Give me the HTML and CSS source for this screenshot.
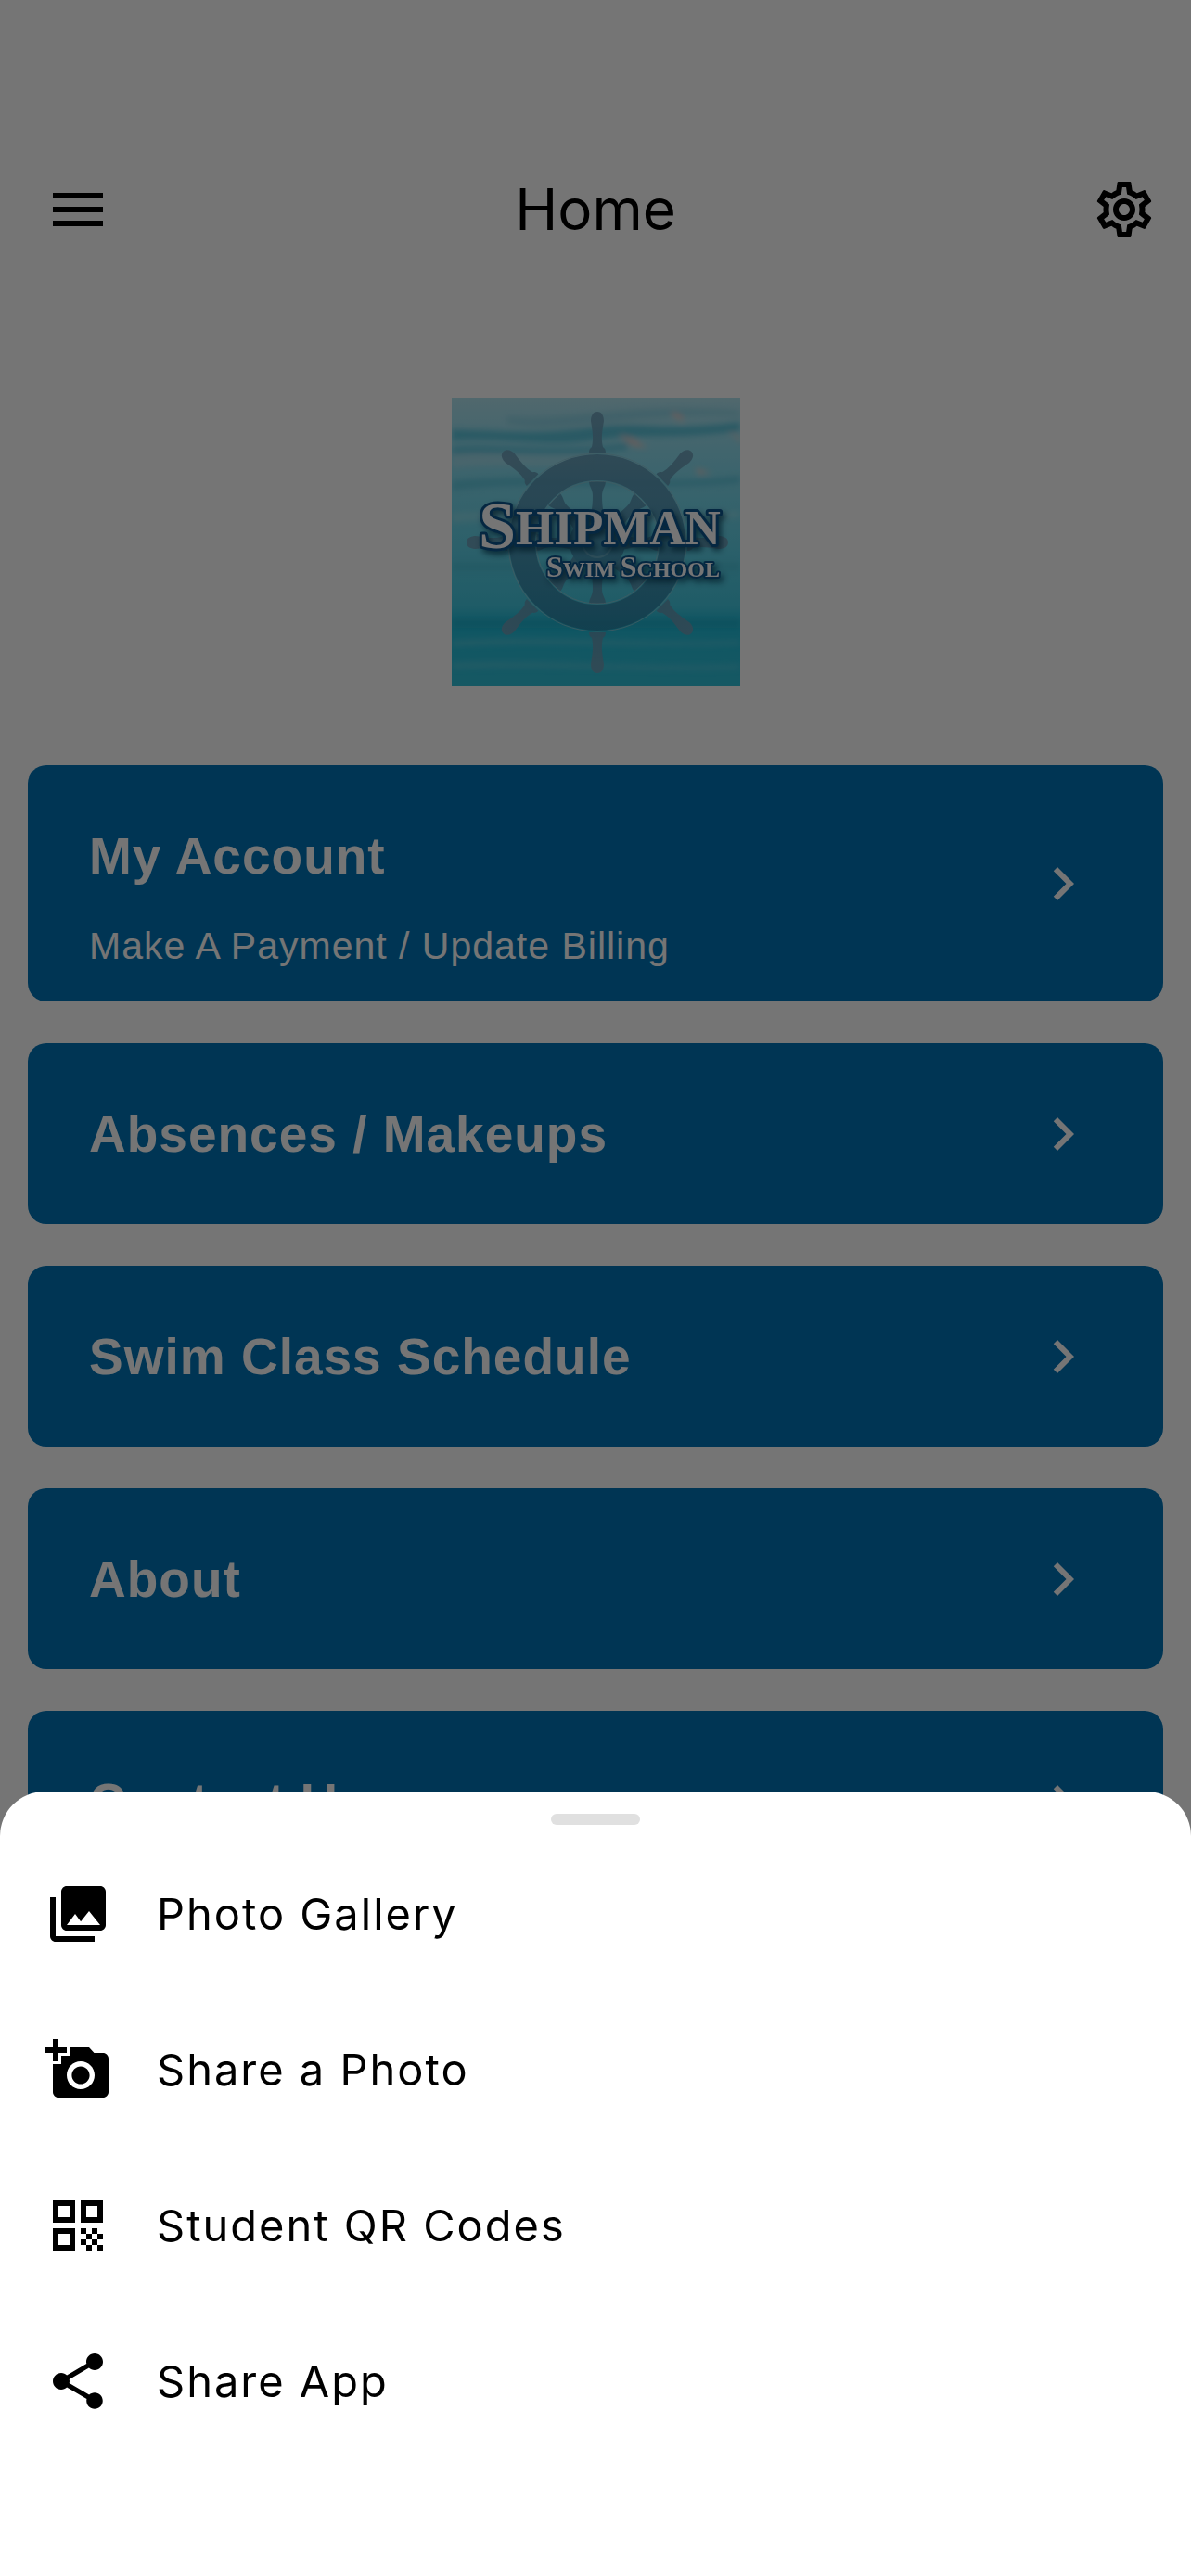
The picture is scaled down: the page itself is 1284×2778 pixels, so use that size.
FILE: index.html
```html
<!DOCTYPE html>
<html lang="en">
<head>
<meta charset="utf-8">
<meta name="viewport" content="width=device-width, initial-scale=1">
<title>Home</title>
<link rel="stylesheet" href="styles.css">
</head>
<body>
<svg class="defs" aria-hidden="true">
  <symbol id="chevron" viewBox="0 0 24 24"><path d="M10 6 8.59 7.41 13.17 12l-4.58 4.59L10 18l6-6z"/></symbol>
</svg>

<div class="page">
  <header class="topbar">
    <button class="icon-button" type="button" aria-label="Menu">
      <svg class="icon" viewBox="0 0 24 24"><path d="M3 18h18v-2H3v2zm0-5h18v-2H3v2zm0-7v2h18V6H3z"/></svg>
    </button>
    <h1 class="topbar-title">Home</h1>
    <button class="icon-button icon-button-end" type="button" aria-label="Settings">
      <svg class="icon" viewBox="0 0 24 24"><path d="M19.43 12.98c.04-.32.07-.64.07-.98 0-.34-.03-.66-.07-.98l2.11-1.65c.19-.15.24-.42.12-.64l-2-3.46c-.09-.16-.26-.25-.44-.25-.06 0-.12.01-.17.03l-2.49 1c-.52-.4-1.08-.73-1.69-.98l-.38-2.65C14.46 2.18 14.25 2 14 2h-4c-.25 0-.46.18-.49.42l-.38 2.65c-.61.25-1.17.59-1.69.98l-2.49-1c-.06-.02-.12-.03-.18-.03-.17 0-.34.09-.43.25l-2 3.46c-.13.22-.07.49.12.64l2.11 1.65c-.04.32-.07.65-.07.98 0 .33.03.66.07.98l-2.11 1.65c-.19.15-.24.42-.12.64l2 3.46c.09.16.26.25.44.25.06 0 .12-.01.17-.03l2.49-1c.52.4 1.08.73 1.69.98l.38 2.65c.03.24.24.42.49.42h4c.25 0 .46-.18.49-.42l.38-2.65c.61-.25 1.17-.59 1.69-.98l2.49 1c.06.02.12.03.18.03.17 0 .34-.09.43-.25l2-3.46c.12-.22.07-.49-.12-.64l-2.11-1.65zm-1.98-1.71c.04.31.05.52.05.73 0 .21-.02.43-.05.73l-.14 1.13.89.7 1.08.84-.7 1.21-1.27-.51-1.04-.42-.9.68c-.43.32-.84.56-1.25.73l-1.06.43-.16 1.13-.2 1.35h-1.4l-.19-1.35-.16-1.13-1.06-.43c-.43-.18-.83-.41-1.23-.71l-.91-.7-1.06.43-1.27.51-.7-1.21 1.08-.84.89-.7-.14-1.13c-.03-.31-.05-.54-.05-.74s.02-.43.05-.73l.14-1.13-.89-.7-1.08-.84.7-1.21 1.27.51 1.04.42.9-.68c.43-.32.84-.56 1.25-.73l1.06-.43.16-1.13.2-1.35h1.39l.19 1.35.16 1.13 1.06.43c.43.18.83.41 1.23.71l.91.7 1.06-.43 1.27-.51.7 1.21-1.07.85-.89.7.14 1.13zM12 8c-2.21 0-4 1.79-4 4s1.79 4 4 4 4-1.79 4-4-1.79-4-4-4zm0 6c-1.1 0-2-.9-2-2s.9-2 2-2 2 .9 2 2-.9 2-2 2z"/></svg>
    </button>
  </header>

  <main class="content">
    <svg class="logo" viewBox="0 0 311 311" role="img" aria-label="Shipman Swim School">
      <defs>
        <linearGradient id="water" x1="0" y1="0" x2="0" y2="1">
          <stop offset="0" stop-color="#b0e2ee"/>
          <stop offset=".2" stop-color="#8cdcee"/>
          <stop offset=".5" stop-color="#62d2e8"/>
          <stop offset=".72" stop-color="#44c8e0"/>
          <stop offset=".78" stop-color="#22bcd8"/>
          <stop offset="1" stop-color="#30c0d8"/>
        </linearGradient>
        <linearGradient id="wood" gradientUnits="userSpaceOnUse" x1="0" y1="-141" x2="0" y2="141">
          <stop offset="0" stop-color="#6f9fb8"/>
          <stop offset=".4" stop-color="#5093b2"/>
          <stop offset="1" stop-color="#1c84a6"/>
        </linearGradient>
        <filter id="soft" x="-20%" y="-100%" width="140%" height="300%"><feGaussianBlur stdDeviation="3"/></filter>
        <filter id="drop" x="-10%" y="-30%" width="130%" height="180%"><feDropShadow dx="3" dy="4" stdDeviation="3" flood-color="#003050" flood-opacity=".7"/></filter>
        <g id="spoke">
          <path d="M-9-97h18c0-4-2-5-3-6-2-8-1-16 1-28 0-5-2-10-7-10s-7 5-7 10c2 12 3 20 1 28-1 1-3 2-3 6z"/>
        </g>
        <g id="inner-spoke">
          <path d="M-9-66H9c0 6-4 8-4 16 0 12 2 22 6 30h-22c4-8 6-18 6-30 0-8-4-10-4-16z"/>
        </g>
      </defs>
      <rect width="311" height="311" fill="url(#water)"/>
      <g filter="url(#soft)">
        <path d="M0 34c60 2 90 6 150-2s70 6 161-6v10c-80 10-110 2-160 10S60 42 0 46z" fill="#3cb4d0" opacity=".65"/>
        <path d="M0 52c50-4 120 8 190-4v8c-70 10-130 2-190 6z" fill="#3cb4d0" opacity=".5"/>
        <path d="M60 20c60 8 120-16 250-6v6c-100-6-190 20-250 8z" fill="#8ad0e2" opacity=".8"/>
        <path d="M0 62c60-4 90 6 150 0v10c-60 4-100-2-150 4z" fill="#c8e0e8" opacity=".35"/>
        <path d="M0 90c80-10 220 6 311-6v8c-100 10-220-4-311 8z" fill="#4fbcd4" opacity=".6"/>
        <path d="M0 124c90-6 200 6 311-2v7c-110 8-220-4-311 6z" fill="#9fe0ec" opacity=".5"/>
        <path d="M0 178h311v8H0z" fill="#45b9d0" opacity=".5"/>
        <path d="M0 238h311v10H0z" fill="#1aa5c0" opacity=".4"/>
        <path d="M0 262c100-6 200 4 311 0v4c-100 4-200-4-311 2z" fill="#66cee0" opacity=".6"/>
        <path d="M0 286c100-4 200 6 311 2v4c-100 4-200-4-311 0z" fill="#66cee0" opacity=".6"/>
        <path d="M236 16q12 0 15 9-10-1-15-9zM262 76l18 5-14 1zM298 36l14 8v4zM180 40l14 4 18 10-16-2z" fill="#e6c9c4"/>
      </g>
      <g transform="translate(157 156)" fill="url(#wood)">
        <g opacity=".9">
          <use href="#spoke"/>
          <use href="#spoke" transform="rotate(46)"/>
          <use href="#spoke" transform="rotate(90)"/>
          <use href="#spoke" transform="rotate(134)"/>
          <use href="#spoke" transform="rotate(180)"/>
          <use href="#spoke" transform="rotate(226)"/>
          <use href="#spoke" transform="rotate(270)"/>
          <use href="#spoke" transform="rotate(314)"/>
          <use href="#inner-spoke"/>
          <use href="#inner-spoke" transform="rotate(45)"/>
          <use href="#inner-spoke" transform="rotate(90)"/>
          <use href="#inner-spoke" transform="rotate(135)"/>
          <use href="#inner-spoke" transform="rotate(180)"/>
          <use href="#inner-spoke" transform="rotate(225)"/>
          <use href="#inner-spoke" transform="rotate(270)"/>
          <use href="#inner-spoke" transform="rotate(315)"/>
          <circle r="30"/>
          <circle r="81" fill="none" stroke="url(#wood)" stroke-width="28"/>
        </g>
        <circle r="96" fill="none" stroke="#8fc6d4" stroke-width="1" opacity=".8"/>
        <circle r="66" fill="none" stroke="#8fc6d4" stroke-width="1" opacity=".8"/>
        <circle r="16" fill="none" stroke="#8fc6d4" stroke-width="2" opacity=".4"/>
      </g>
      <g class="logo-text" filter="url(#drop)">
        <text x="29" y="158"><tspan class="logo-initial" dy="4">S</tspan><tspan class="logo-caps" dy="-4">HIPMAN</tspan></text>
        <text class="logo-small" x="102" y="193"><tspan class="logo-small-initial">S</tspan>WIM <tspan class="logo-small-initial">S</tspan>CHOOL</text>
      </g>
    </svg>

    <nav class="cards" aria-label="Home sections">
      <a class="card card-detailed" href="#account">
        <span class="card-text">
          <span class="card-title">My Account</span>
          <span class="card-subtitle">Make A Payment / Update Billing</span>
        </span>
        <svg class="icon" aria-hidden="true"><use href="#chevron"/></svg>
      </a>
      <a class="card" href="#absences">
        <span class="card-title">Absences / Makeups</span>
        <svg class="icon" aria-hidden="true"><use href="#chevron"/></svg>
      </a>
      <a class="card" href="#schedule">
        <span class="card-title">Swim Class Schedule</span>
        <svg class="icon" aria-hidden="true"><use href="#chevron"/></svg>
      </a>
      <a class="card" href="#about">
        <span class="card-title">About</span>
        <svg class="icon" aria-hidden="true"><use href="#chevron"/></svg>
      </a>
      <a class="card" href="#contact">
        <span class="card-title">Contact Us</span>
        <svg class="icon" aria-hidden="true"><use href="#chevron"/></svg>
      </a>
    </nav>
  </main>
</div>

<div class="scrim"></div>

<section class="sheet" role="dialog" aria-label="More options">
  <div class="sheet-handle"></div>
  <div class="sheet-list">
    <button class="sheet-item" type="button">
      <svg class="icon" viewBox="0 0 24 24"><path d="M22 16V4c0-1.1-.9-2-2-2H8c-1.1 0-2 .9-2 2v12c0 1.1.9 2 2 2h12c1.1 0 2-.9 2-2zm-11-4 2.03 2.71L16 11l4 5H8l3-4zM2 6v14c0 1.1.9 2 2 2h14v-2H4V6H2z"/></svg>
      <span>Photo Gallery</span>
    </button>
    <button class="sheet-item" type="button">
      <svg class="icon" viewBox="0 0 24 24"><path d="M3 4V1h2v3h3v2H5v3H3V6H0V4h3zm3 6V7h3V4h7l1.83 2H21c1.1 0 2 .9 2 2v12c0 1.1-.9 2-2 2H5c-1.1 0-2-.9-2-2V10h3zm7 9c2.76 0 5-2.24 5-5s-2.24-5-5-5-5 2.24-5 5 2.24 5 5 5zm-3.2-5c0 1.77 1.43 3.2 3.2 3.2s3.2-1.43 3.2-3.2-1.43-3.2-3.2-3.2-3.2 1.43-3.2 3.2z"/></svg>
      <span>Share a Photo</span>
    </button>
    <button class="sheet-item" type="button">
      <svg class="icon" viewBox="0 0 24 24" shape-rendering="crispEdges"><path d="M3 11h8V3H3v8zm2-6h4v4H5V5zM3 21h8v-8H3v8zm2-6h4v4H5v-4zM13 3v8h8V3h-8zm6 6h-4V5h4v4zM13 13h2v2h-2zM17 13h2v2h-2zM15 15h2v2h-2zM19 15h2v2h-2zM13 17h2v2h-2zM17 17h2v2h-2zM15 19h2v2h-2zM19 19h2v2h-2z"/></svg>
      <span>Student QR Codes</span>
    </button>
    <button class="sheet-item" type="button">
      <svg class="icon" viewBox="0 0 24 24"><path d="M18 16.08c-.76 0-1.44.3-1.96.77L8.91 12.7c.05-.23.09-.46.09-.7s-.04-.47-.09-.7l7.05-4.11c.54.5 1.25.81 2.04.81 1.66 0 3-1.34 3-3s-1.34-3-3-3-3 1.34-3 3c0 .24.04.47.09.7L8.04 9.81C7.5 9.31 6.79 9 6 9c-1.66 0-3 1.34-3 3s1.34 3 3 3c.79 0 1.5-.31 2.04-.81l7.12 4.16c-.05.21-.08.43-.08.65 0 1.61 1.31 2.92 2.92 2.92s2.92-1.31 2.92-2.92-1.31-2.92-2.92-2.92z"/></svg>
      <span>Share App</span>
    </button>
  </div>
</section>
</body>
</html>
```
FILE: styles.css
```css
* {
  box-sizing: border-box;
}

body {
  margin: 0;
  background: #fff;
  color: #000;
  font-family: Inter, "Liberation Sans", sans-serif;
}

button {
  margin: 0;
  padding: 0;
  border: 0;
  background: none;
  color: inherit;
  font: inherit;
  text-align: left;
}

.defs {
  display: none;
}

.icon {
  display: block;
  flex: none;
  width: 72px;
  height: 72px;
  fill: currentColor;
}

.page {
  min-height: 100vh;
}

.topbar {
  display: grid;
  grid-template-columns: 1fr auto 1fr;
  align-items: center;
  padding: 189px 36px 0 36px;
}

.icon-button {
  justify-self: start;
  padding-left: 12px;
}

.icon-button-end {
  justify-self: end;
  padding-left: 0;
}

.topbar-title {
  margin: 0;
  font-size: 62px;
  font-weight: 400;
  line-height: 74px;
}

.content {
  display: flex;
  flex-direction: column;
  align-items: center;
  gap: 85px;
  padding: 166px 30px 30px;
}

.logo {
  display: block;
  width: 311px;
  height: 311px;
}

.logo-text {
  fill: #fff;
  stroke: #0b568f;
  stroke-width: 6px;
  stroke-linejoin: round;
  paint-order: stroke;
  font-family: "Liberation Serif", serif;
  font-weight: 700;
}

.logo-initial {
  font-size: 72px;
}

.logo-caps {
  font-size: 53px;
}

.logo-small {
  font-size: 24px;
  stroke-width: 4px;
}

.logo-small-initial {
  font-size: 32px;
}

.cards {
  display: flex;
  flex-direction: column;
  align-self: stretch;
  gap: 45px;
}

.card {
  display: flex;
  align-items: center;
  justify-content: space-between;
  min-height: 195px;
  padding: 0 72px 0 66px;
  border-radius: 20px;
  background: #0074b8;
  color: #fff;
  font-family: "Liberation Sans", Arial, sans-serif;
  text-decoration: none;
}

.card-detailed {
  min-height: 255px;
}

.card-text {
  display: flex;
  flex-direction: column;
  gap: 40px;
  padding: 65px 0 36px;
}

.card-title {
  font-size: 55px;
  font-weight: 700;
  line-height: 66px;
  letter-spacing: 1px;
}

.card-subtitle {
  font-size: 41px;
  line-height: 48px;
  letter-spacing: 1px;
}

.scrim {
  position: fixed;
  inset: 0;
  background: rgba(0, 0, 0, 0.54);
}

.sheet {
  position: fixed;
  right: 0;
  bottom: 0;
  left: 0;
  padding: 24px 0 126px;
  border-radius: 48px 48px 0 0;
  background: #fff;
}

.sheet-handle {
  width: 96px;
  height: 12px;
  margin: 0 auto 12px;
  border-radius: 6px;
  background: #e0e0e0;
}

.sheet-list {
  display: flex;
  flex-direction: column;
}

.sheet-item {
  display: flex;
  align-items: center;
  gap: 49px;
  width: 100%;
  height: 168px;
  padding: 0 48px;
  font-size: 47px;
  line-height: 60px;
  letter-spacing: 2px;
}
```
